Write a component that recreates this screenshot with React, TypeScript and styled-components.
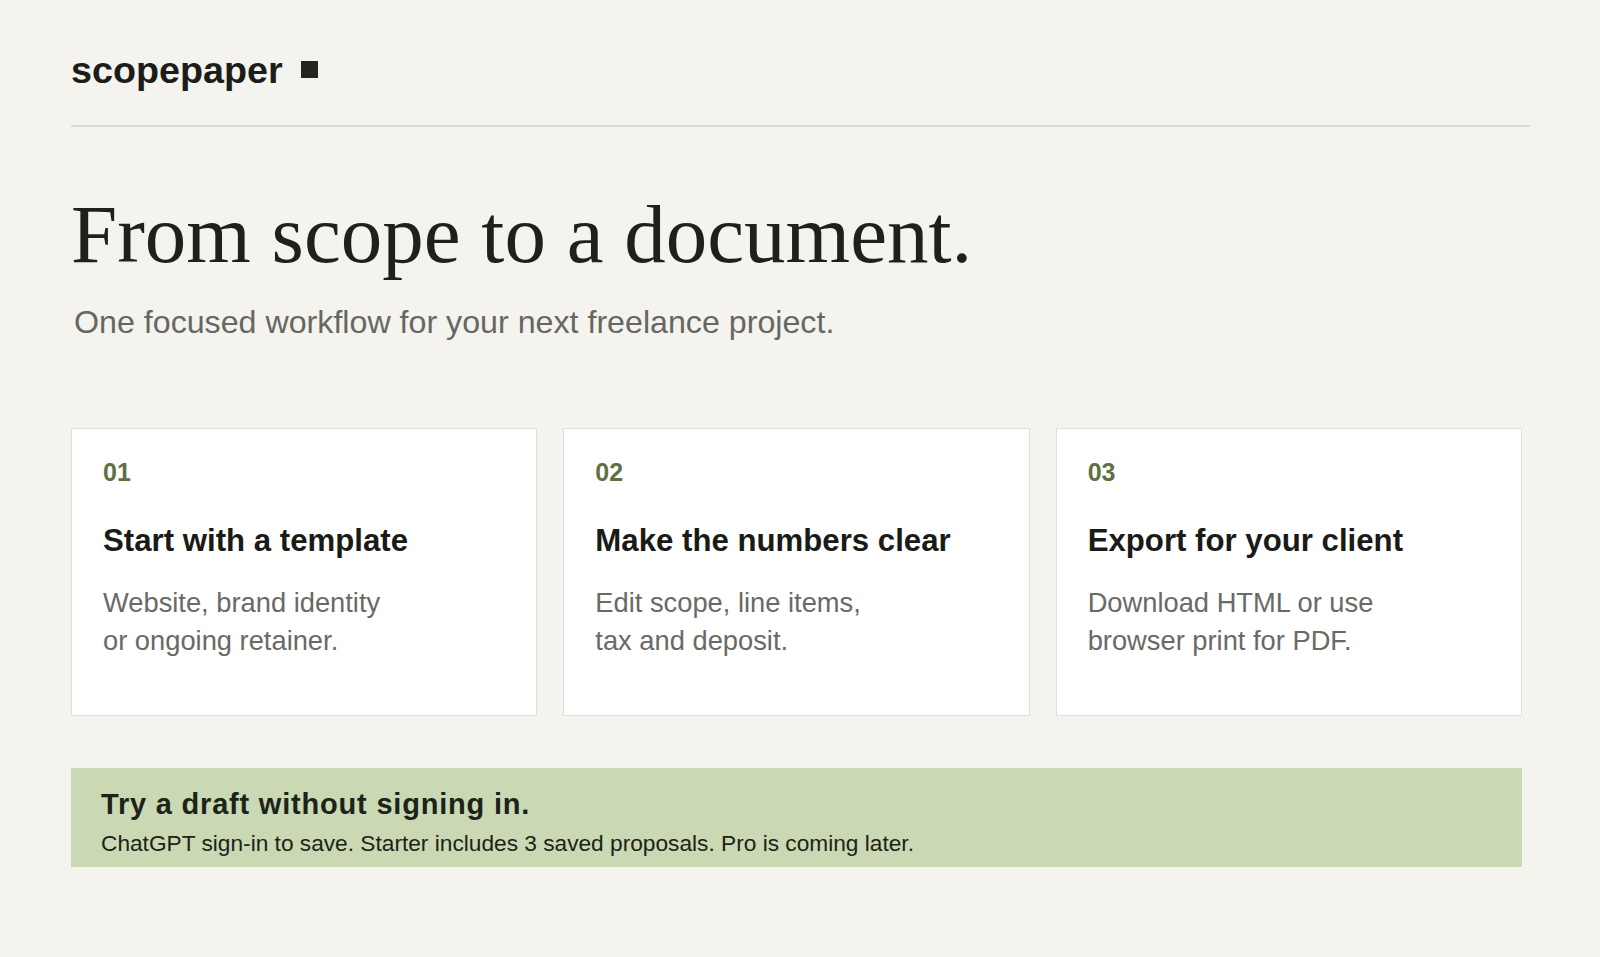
import React from 'react';
import styled, { createGlobalStyle } from 'styled-components';

type Step = {
  number: string;
  title: string;
  lines: string[];
};

const steps: Step[] = [
  {
    number: '01',
    title: 'Start with a template',
    lines: ['Website, brand identity', 'or ongoing retainer.'],
  },
  {
    number: '02',
    title: 'Make the numbers clear',
    lines: ['Edit scope, line items,', 'tax and deposit.'],
  },
  {
    number: '03',
    title: 'Export for your client',
    lines: ['Download HTML or use', 'browser print for PDF.'],
  },
];

const GlobalStyle = createGlobalStyle`
  * {
    box-sizing: border-box;
  }

  body {
    margin: 0;
    background: #f4f3ee;
    color: #1c1d19;
    font-family: "Liberation Sans", Arial, sans-serif;
  }
`;

export default function App(): JSX.Element {
  return (
    <>
      <GlobalStyle />
      <Page>
        <Header>
          <Logo>scopepaper</Logo>
          <LogoMark />
        </Header>

        <Main>
          <Title>From scope to a document.</Title>
          <Lead>One focused workflow for your next freelance project.</Lead>

          <Steps>
            {steps.map((step) => (
              <Card key={step.number}>
                <StepNumber>{step.number}</StepNumber>
                <CardTitle>{step.title}</CardTitle>
                <CardText>
                  {step.lines[0]}
                  <br />
                  {step.lines[1]}
                </CardText>
              </Card>
            ))}
          </Steps>

          <Banner>
            <BannerTitle>Try a draft without signing in.</BannerTitle>
            <BannerText>
              ChatGPT sign-in to save. Starter includes 3 saved proposals. Pro is
              coming later.
            </BannerText>
          </Banner>
        </Main>
      </Page>
    </>
  );
}

const Page = styled.div`
  width: 1459px;
  margin-left: 71px;
  padding-bottom: 80px;
`;

const Header = styled.header`
  display: flex;
  align-items: center;
  gap: 18px;
  padding: 52px 0 36px;
  border-bottom: 2px solid #dcdcd6;
`;

const Logo = styled.div`
  font-size: 37.7px;
  line-height: 37px;
  font-weight: 700;
  color: #1c1d19;
`;

const LogoMark = styled.span`
  display: block;
  width: 17px;
  height: 17px;
  margin-bottom: 3px;
  background: #23241f;
`;

const Main = styled.main`
  width: 1451px;
`;

const Title = styled.h1`
  margin: 62px 0 0;
  font-family: "Liberation Serif", "Times New Roman", serif;
  font-size: 83px;
  line-height: 90px;
  font-weight: 400;
  color: #1f201b;
`;

const Lead = styled.p`
  margin: 24px 0 0 3px;
  font-size: 32.2px;
  line-height: 38px;
  color: #666762;
`;

const Steps = styled.section`
  display: grid;
  grid-template-columns: repeat(3, 1fr);
  gap: 26px;
  margin-top: 87px;
`;

const Card = styled.article`
  background: #ffffff;
  border: 1px solid #dedfd8;
  padding: 31px 31px 55px;
`;

const StepNumber = styled.div`
  font-size: 25px;
  line-height: 1;
  font-weight: 700;
  color: #5e7044;
`;

const CardTitle = styled.h2`
  margin: 37px 0 0;
  font-size: 31.2px;
  line-height: 37px;
  font-weight: 700;
  color: #1a1b17;
`;

const CardText = styled.p`
  margin: 25px 0 0;
  font-size: 27.3px;
  line-height: 38px;
  color: #696a65;
`;

const Banner = styled.section`
  margin-top: 52px;
  background: #cad8b3;
  padding: 19px 30px 9px;
`;

const BannerTitle = styled.h3`
  margin: 0;
  font-size: 29px;
  line-height: 35px;
  font-weight: 700;
  letter-spacing: 0.8px;
  color: #1c2318;
`;

const BannerText = styled.p`
  margin: 7px 0 0;
  font-size: 22.7px;
  line-height: 29px;
  color: #1c2318;
`;
